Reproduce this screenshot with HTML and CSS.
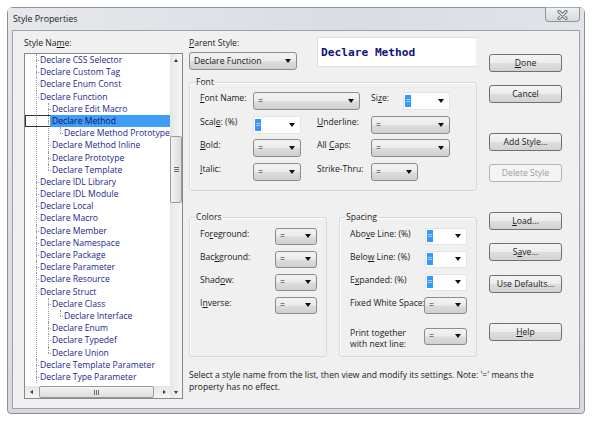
FILE: index.html
```html
<!DOCTYPE html>
<html>
<head>
<meta charset="utf-8">
<title>Style Properties</title>
<link rel="stylesheet" href="styles.css">
</head>
<body>
<div class="window">
  <div class="titlebar">
    <span class="title">Style Properties</span>
    <div class="close">
      <svg width="11" height="10" viewBox="0 0 11 10"><path d="M2 1.5 L9 8.5 M9 1.5 L2 8.5" stroke="#6f7378" stroke-width="3.2" stroke-linecap="round"/><path d="M2 1.5 L9 8.5 M9 1.5 L2 8.5" stroke="#e9ecef" stroke-width="1.3" stroke-linecap="round"/></svg>
    </div>
  </div>
  <div class="client">
    <div class="left">
      <div class="label">Style Na<u>m</u>e:</div>
      <div class="listbox">
        <div class="list-view">
          <ul class="tree">
            <li><span class="row">Declare CSS Selector</span></li>
            <li><span class="row">Declare Custom Tag</span></li>
            <li><span class="row">Declare Enum Const</span></li>
            <li><span class="row">Declare Function</span>
              <ul>
                <li><span class="row">Declare Edit Macro</span></li>
                <li class="sel"><span class="row">Declare Method</span>
                  <ul>
                    <li><span class="row">Declare Method Prototype</span></li>
                  </ul>
                </li>
                <li><span class="row">Declare Method Inline</span></li>
                <li><span class="row">Declare Prototype</span></li>
                <li><span class="row">Declare Template</span></li>
              </ul>
            </li>
            <li><span class="row">Declare IDL Library</span></li>
            <li><span class="row">Declare IDL Module</span></li>
            <li><span class="row">Declare Local</span></li>
            <li><span class="row">Declare Macro</span></li>
            <li><span class="row">Declare Member</span></li>
            <li><span class="row">Declare Namespace</span></li>
            <li><span class="row">Declare Package</span></li>
            <li><span class="row">Declare Parameter</span></li>
            <li><span class="row">Declare Resource</span></li>
            <li><span class="row">Declare Struct</span>
              <ul>
                <li><span class="row">Declare Class</span>
                  <ul>
                    <li><span class="row">Declare Interface</span></li>
                  </ul>
                </li>
                <li><span class="row">Declare Enum</span></li>
                <li><span class="row">Declare Typedef</span></li>
                <li><span class="row">Declare Union</span></li>
              </ul>
            </li>
            <li><span class="row">Declare Template Parameter</span></li>
            <li><span class="row">Declare Type Parameter</span></li>
          </ul>
        </div>
        <div class="vscroll">
          <span class="sbtn"><i class="tri up"></i></span>
          <span class="vtrack"><span class="vthumb"><i class="grip-h"></i></span></span>
          <span class="sbtn"><i class="tri down"></i></span>
        </div>
        <div class="hscroll">
          <span class="sbtn"><i class="tri lft"></i></span>
          <span class="hthumb"><i class="grip-v"></i></span>
          <span class="sbtn"><i class="tri rgt"></i></span>
        </div>
      </div>
    </div>

    <div class="main">
      <div class="upper">
        <div class="settings">
          <div class="parent-row">
            <div class="parent">
              <div class="label"><u>P</u>arent Style:</div>
              <div class="combo w108 mt3"><span class="val">Declare Function</span><i class="arrow"></i></div>
            </div>
            <div class="preview">Declare Method</div>
          </div>

          <fieldset class="group font-group">
            <legend>Font</legend>
            <div class="frow">
              <span class="flabel w53"><u>F</u>ont Name:</span>
              <div class="combo w107"><span class="val">=</span><i class="arrow"></i></div>
              <span class="flabel w32 ml11">Si<u>z</u>e:</span>
              <div class="combo edit w47"><span class="val"><b class="hl">=</b></span><i class="arrow"></i></div>
            </div>
            <div class="frow">
              <span class="flabel w53">Scal<u>e</u>: (%)</span>
              <div class="combo edit w48"><span class="val"><b class="hl">=</b></span><i class="arrow"></i></div>
              <span class="flabel w54 ml16"><u>U</u>nderline:</span>
              <div class="combo w79"><span class="val">=</span><i class="arrow"></i></div>
            </div>
            <div class="frow">
              <span class="flabel w53"><u>B</u>old:</span>
              <div class="combo w48"><span class="val">=</span><i class="arrow"></i></div>
              <span class="flabel w54 ml16">All <u>C</u>aps:</span>
              <div class="combo w79"><span class="val">=</span><i class="arrow"></i></div>
            </div>
            <div class="frow">
              <span class="flabel w53"><u>I</u>talic:</span>
              <div class="combo w48"><span class="val">=</span><i class="arrow"></i></div>
              <span class="flabel w54 ml16">Strike-Thru:</span>
              <div class="combo w47"><span class="val">=</span><i class="arrow"></i></div>
            </div>
          </fieldset>

          <div class="groups-row">
            <fieldset class="group half">
              <legend>Colors</legend>
              <div class="frow srow">
                <span class="flabel w75">Fo<u>r</u>eground:</span>
                <div class="combo w42"><span class="val">=</span><i class="arrow"></i></div>
              </div>
              <div class="frow srow">
                <span class="flabel w75">Bac<u>k</u>ground:</span>
                <div class="combo w42"><span class="val">=</span><i class="arrow"></i></div>
              </div>
              <div class="frow srow">
                <span class="flabel w75">Shad<u>o</u>w:</span>
                <div class="combo w42"><span class="val">=</span><i class="arrow"></i></div>
              </div>
              <div class="frow srow">
                <span class="flabel w75">I<u>n</u>verse:</span>
                <div class="combo w42"><span class="val">=</span><i class="arrow"></i></div>
              </div>
            </fieldset>
            <fieldset class="group half">
              <legend>Spacing</legend>
              <div class="frow srow">
                <span class="flabel w75">Abo<u>v</u>e Line: (%)</span>
                <div class="combo edit w42"><span class="val"><b class="hl">=</b></span><i class="arrow"></i></div>
              </div>
              <div class="frow srow">
                <span class="flabel w75">Belo<u>w</u> Line: (%)</span>
                <div class="combo edit w42"><span class="val"><b class="hl">=</b></span><i class="arrow"></i></div>
              </div>
              <div class="frow srow">
                <span class="flabel w75">E<u>x</u>panded: (%)</span>
                <div class="combo edit w42"><span class="val"><b class="hl">=</b></span><i class="arrow"></i></div>
              </div>
              <div class="frow srow">
                <span class="flabel w75">Fixed White Space:</span>
                <div class="combo w43 shift"><span class="val">=</span><i class="arrow"></i></div>
              </div>
              <div class="frow srow print">
                <span class="flabel w75 two">Print together<br>with next line:</span>
                <div class="combo w43 shift"><span class="val">=</span><i class="arrow"></i></div>
              </div>
            </fieldset>
          </div>
        </div>

        <div class="buttons">
          <div class="btn first"><u>D</u>one</div>
          <div class="btn">Cancel</div>
          <div class="btn far">Add Style...</div>
          <div class="btn disabled">Delete Style</div>
          <div class="btn far"><u>L</u>oad...</div>
          <div class="btn">S<u>a</u>ve...</div>
          <div class="btn">Use Defaults...</div>
          <div class="btn far"><u>H</u>elp</div>
        </div>
      </div>
      <p class="note">Select a style name from the list, then view and modify its settings. Note: '=' means the property has no effect.</p>
    </div>
  </div>
</div>
</body>
</html>
```
FILE: styles.css
```css
html, body {
  margin: 0;
  padding: 0;
  background: #ffffff;
}
body {
  font-family: "Open Sans", "Noto Sans", sans-serif;
  font-size: 8.6px;
  color: #1a1a1a;
}
u { text-decoration: underline; text-underline-offset: 1px; }

.window {
  margin: 7px 0 0 7px;
  width: 578px;
  height: 407px;
  box-sizing: border-box;
  border: 1px solid #8a8f95;
  border-radius: 6px 6px 4px 4px;
  background: linear-gradient(to bottom, #e4e7ea 0%, #dadde2 60%, #d7dbe0 100%);
  padding: 0 4px 4px 4px;
  display: flex;
  flex-direction: column;
}

.titlebar {
  height: 22px;
  display: flex;
  align-items: flex-start;
  background: linear-gradient(to right, #e6e8eb, #d9dde2 60%, #e1e4e8);
  margin: 0 -4px;
  padding: 0 4px 0 5px;
}
.title {
  font-size: 8.8px;
  line-height: 12px;
  margin-top: 5px;
  color: #1c1c1c;
}
.close {
  margin-left: auto;
  margin-top: -1px;
  width: 35px;
  height: 15px;
  box-sizing: border-box;
  border: 1px solid #8f949b;
  border-top-color: #a5aab0;
  border-radius: 0 0 4px 4px;
  background: linear-gradient(to bottom, #eef0f2, #d6dade);
  display: flex;
  align-items: center;
  justify-content: center;
}

.client {
  flex: 1;
  box-sizing: border-box;
  border: 1px solid #9da2a8;
  background: #f0f0f0;
  padding: 6px 0 0 11px;
  display: flex;
  gap: 6px;
}

.label {
  line-height: 12px;
  height: 12px;
  white-space: nowrap;
}

/* ---- list ---- */
.left { width: 159px; }
.listbox {
  margin-top: 4px;
  height: 346px;
  box-sizing: border-box;
  border: 1px solid #828790;
  background: #ffffff;
  display: grid;
  grid-template-columns: 1fr 12px;
  grid-template-rows: 1fr 12px;
}
.list-view {
  overflow: hidden;
  position: relative;
}
.tree, .tree ul {
  list-style: none;
  margin: 0;
  padding: 0;
}
.tree { padding-left: 15px; }
.tree ul { padding-left: 12px; }
.tree li { position: relative; }
.tree li::before {
  content: "";
  position: absolute;
  left: -4px;
  top: 0;
  bottom: 0;
  border-left: 1px dotted #9a9a9a;
}
.tree li:last-child::before { bottom: auto; height: 6px; }
.tree > li:last-child::before { bottom: 0; height: auto; }
.tree li::after {
  content: "";
  position: absolute;
  left: -4px;
  top: 6px;
  width: 3px;
  border-top: 1px dotted #9a9a9a;
}
.row {
  display: block;
  line-height: 12.2px;
  height: 12.2px;
  white-space: nowrap;
  color: #25258c;
  position: relative;
}
.sel > .row {
  background: #3f9cf7;
  margin-left: -2px;
  padding-left: 2px;
  color: #141466;
}
.sel > .row::before {
  content: "";
  position: absolute;
  left: -25px;
  top: 0;
  bottom: 0;
  width: 25px;
  box-sizing: border-box;
  border: 1px solid #333;
  border-right: none;
}

.vscroll {
  grid-row: 1 / 3;
  grid-column: 2;
  display: flex;
  flex-direction: column;
  background: linear-gradient(to right, #e6e6e6, #f5f5f5);
}
.hscroll {
  grid-row: 2;
  grid-column: 1;
  display: flex;
  align-items: stretch;
  background: linear-gradient(to bottom, #e6e6e6, #f5f5f5);
}
.sbtn {
  width: 12px;
  height: 12px;
  display: flex;
  align-items: center;
  justify-content: center;
  flex: none;
}
.tri { width: 0; height: 0; display: block; }
.tri.up { border-left: 2.5px solid transparent; border-right: 2.5px solid transparent; border-bottom: 3px solid #3a3a3a; }
.tri.down { border-left: 2.5px solid transparent; border-right: 2.5px solid transparent; border-top: 3px solid #3a3a3a; }
.tri.lft { border-top: 2.5px solid transparent; border-bottom: 2.5px solid transparent; border-right: 3px solid #3a3a3a; }
.tri.rgt { border-top: 2.5px solid transparent; border-bottom: 2.5px solid transparent; border-left: 3px solid #3a3a3a; }
.vtrack { flex: 1; position: relative; display: flex; flex-direction: column; }
.vthumb {
  margin-top: 70px;
  height: 67px;
  box-sizing: border-box;
  border: 1px solid #9b9b9b;
  border-radius: 2px;
  background: linear-gradient(to right, #f4f4f4, #dcdcdc);
  display: flex;
  align-items: center;
  justify-content: center;
}
.hthumb {
  margin-left: 2px;
  width: 115px;
  box-sizing: border-box;
  border: 1px solid #9b9b9b;
  border-radius: 2px;
  background: linear-gradient(to bottom, #f4f4f4, #dcdcdc);
  display: flex;
  align-items: center;
  justify-content: center;
}
.hscroll .sbtn:last-child { margin-left: auto; }
.grip-h {
  display: block;
  width: 5px;
  height: 5px;
  background: repeating-linear-gradient(to bottom, #6a6a6a 0 1px, transparent 1px 2px);
}
.grip-v {
  display: block;
  width: 5px;
  height: 5px;
  background: repeating-linear-gradient(to right, #6a6a6a 0 1px, transparent 1px 2px);
}

/* ---- main ---- */
.main { display: flex; flex-direction: column; }
.upper { display: flex; gap: 12px; }
.settings { width: 288px; }

.parent-row { display: flex; justify-content: space-between; }
.mt3 { margin-top: 3px; }
.preview {
  width: 160px;
  height: 30px;
  box-sizing: border-box;
  background: #ffffff;
  border: 1px solid #dcdcdc;
  border-right-color: #efefef;
  display: flex;
  align-items: center;
  padding-left: 3px;
  font-family: "DejaVu Sans Mono", "Liberation Mono", monospace;
  font-weight: bold;
  font-size: 11.2px;
  color: #12127e;
  white-space: nowrap;
}

.combo {
  height: 18px;
  box-sizing: border-box;
  border: 1px solid #8c8c8c;
  border-radius: 3px;
  background: linear-gradient(to bottom, #f3f3f3 0%, #ebebeb 48%, #dddddd 52%, #d0d0d0 100%);
  display: flex;
  align-items: center;
  padding: 0 5px 0 4px;
  flex: none;
  white-space: nowrap;
}
.combo .val { flex: 1; line-height: 12px; }
.combo .arrow {
  display: block;
  width: 0;
  height: 0;
  border-left: 3.5px solid transparent;
  border-right: 3.5px solid transparent;
  border-top: 4px solid #111;
}
.combo.edit {
  background: #ffffff;
  border-color: #e4e4e4;
  border-radius: 0;
  padding-left: 1px;
}
.hl {
  display: inline-block;
  font-weight: normal;
  background: #3399ff;
  color: #ffffff;
  width: 6px;
  height: 12px;
  line-height: 12px;
  text-align: center;
}

.w32 { width: 32px; }
.w42 { width: 42px; }
.w43 { width: 43px; }
.w47 { width: 47px; }
.w48 { width: 48px; }
.w53 { width: 53px; }
.w54 { width: 54px; }
.w75 { width: 75px; }
.w79 { width: 79px; }
.w107 { width: 107px; }
.w108 { width: 108px; }
.ml11 { margin-left: 11px; }
.ml16 { margin-left: 16px; }

.group {
  margin: 0;
  min-width: 0;
  border: 1px solid #d3d9de;
  border-radius: 3px;
  box-shadow: inset 1px 1px 0 #ffffff;
}
.group legend {
  padding: 0 1px;
  margin-left: -5px;
  line-height: 12px;
  font-size: 8.6px;
}
.font-group {
  margin-top: 6px;
  height: 115px;
  box-sizing: border-box;
  padding: 4px 10px 0 10px;
  display: flex;
  flex-direction: column;
  gap: 5.5px;
}
.frow {
  display: flex;
  align-items: flex-start;
}
.flabel {
  line-height: 12px;
  white-space: nowrap;
  flex: none;
}
.groups-row {
  margin-top: 20px;
  display: flex;
  justify-content: space-between;
}
.half {
  width: 138px;
  height: 146px;
  box-sizing: border-box;
  padding: 4.5px 10px 0 10px;
  display: flex;
  flex-direction: column;
  gap: 6px;
}
.srow .combo { height: 17px; }
.shift { margin-left: -1px; }
.print { margin-top: 8px; }
.two { line-height: 11.5px; margin-top: 0px; }

.buttons {
  width: 73px;
  display: flex;
  flex-direction: column;
}
.btn {
  height: 18px;
  box-sizing: border-box;
  border: 1px solid #707070;
  border-radius: 3px;
  background: linear-gradient(to bottom, #f4f4f4 0%, #ececec 48%, #dedede 52%, #d2d2d2 100%);
  display: flex;
  align-items: center;
  justify-content: center;
  line-height: 12px;
  margin-top: 13.3px;
  white-space: nowrap;
}
.btn.first { margin-top: 17px; }
.btn.far { margin-top: 29.8px; }
.btn.disabled {
  color: #9c9c9c;
  border-color: #b4b4b4;
  background: #f4f4f4;
}

.note {
  margin: 13px 0 0 0;
  max-width: 372px;
  line-height: 11.7px;
}
```
